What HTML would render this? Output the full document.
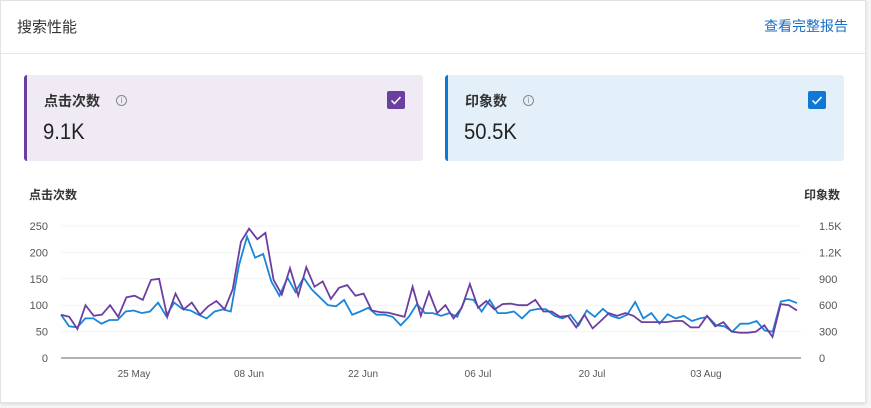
<!DOCTYPE html>
<html><head><meta charset="utf-8"><style>
*{margin:0;padding:0;box-sizing:border-box}
body{width:871px;height:408px;background:#f5f5f5;font-family:"Liberation Sans","Noto Sans CJK SC",sans-serif;position:relative;overflow:hidden}
.card{position:absolute;left:0;top:0;width:866px;height:403px;background:#fff;border:1px solid #e3e3e3;box-shadow:0 1px 3px rgba(0,0,0,.12)}
.hdr{position:absolute;left:0;top:0;width:100%;height:53px;border-bottom:1px solid #e6e6e6}
.title{position:absolute;left:16px;top:15px;font-size:15px;color:#333}
.link{position:absolute;right:17px;top:15px;font-size:14px;color:#1a6fc4}
.m{position:absolute;top:74px;width:399px;height:86px;border-radius:3px}
.m .l{position:absolute;left:17px;top:16px;font-size:14px;font-weight:bold;color:#333}
.m .i{position:absolute;top:20px;width:11px;height:11px;border:1px solid #888;border-radius:50%;font-size:8px;color:#888;text-align:center;line-height:9px}
.m .v{position:absolute;left:16px;top:44px;font-size:22px;color:#222;transform:scaleX(.92);transform-origin:left}
.m .c{position:absolute;right:18px;top:16px;width:18px;height:18px;border-radius:2px}
.ax{position:absolute;font-size:11px;color:#555}
</style></head><body>
<div class="card">
<div class="hdr"><div class="title">搜索性能</div><div class="link">查看完整报告</div></div>
<div class="m" style="left:23px;background:#f0eaf5;border-left:3px solid #6b3fa0"><div class="l">点击次数</div><div class="i" style="left:89px">i</div><div class="v">9.1K</div><div class="c" style="background:#6b3fa0"><svg width="18" height="18"><path d="M4.5 9.5l3 3 6-6.5" stroke="#fff" stroke-width="1.5" fill="none"/></svg></div></div>
<div class="m" style="left:444px;background:#e3f0fa;border-left:3px solid #0f78d4"><div class="l">印象数</div><div class="i" style="left:75px">i</div><div class="v">50.5K</div><div class="c" style="background:#0f78d4"><svg width="18" height="18"><path d="M4.5 9.5l3 3 6-6.5" stroke="#fff" stroke-width="1.5" fill="none"/></svg></div></div>
<div class="ax" style="left:28px;top:185px;font-weight:bold;font-size:12px;color:#333">点击次数</div>
<div class="ax" style="right:25px;top:185px;font-weight:bold;font-size:12px;color:#333">印象数</div>
<svg id="ch" style="position:absolute;left:0;top:0" width="866" height="403"></svg>
</div>
<script>
var p=[82,78,55,100,80,82,100,78,115,118,110,148,150,78,122,92,105,82,98,108,92,130,220,245,225,237,148,120,170,118,172,135,145,112,133,138,118,122,90,87,86,82,78,135,80,125,85,100,75,95,140,95,108,92,102,103,100,100,110,88,88,78,80,58,82,56,70,85,80,85,80,68,68,68,68,70,70,58,58,80,60,68,50,48,48,50,62,40,102,100,90];
var b=[82,60,58,75,75,65,72,72,88,90,85,88,105,80,105,93,90,82,75,88,92,88,175,230,190,197,145,118,152,125,152,130,115,100,98,110,82,88,95,82,82,78,62,78,102,85,85,80,85,78,112,110,88,110,85,85,88,75,90,93,92,80,75,82,62,90,78,93,80,75,82,106,75,85,65,83,75,80,70,75,78,62,60,50,65,65,70,52,50,107,110,104];
var s='',x0=60,x1=796,y0=357,k=132/250;
for(var v=0;v<=250;v+=50){var y=y0-v*k;s+='<text x="47" y="'+(y+4)+'" font-size="11" fill="#555" text-anchor="end" font-family="Liberation Sans">'+v+'</text>';s+='<text x="818" y="'+(y+4)+'" font-size="11" fill="#555" font-family="Liberation Sans">'+['0','300','600','900','1.2K','1.5K'][v/50]+'</text>';if(v)s+='<line x1="60" x2="800" y1="'+y+'" y2="'+y+'" stroke="#f3f3f3"/>';}
s+='<line x1="60" x2="800" y1="357" y2="357" stroke="#999" stroke-width="1.5"/>';
[['25 May',133],['08 Jun',248],['22 Jun',362],['06 Jul',477],['20 Jul',591],['03 Aug',705]].forEach(function(d){s+='<text x="'+d[1]+'" y="376" font-size="10" fill="#555" text-anchor="middle" font-family="Liberation Sans">'+d[0]+'</text>';});
function pl(a,c){var q=[];for(var i=0;i<a.length;i++)q.push((x0+i*(x1-x0)/(a.length-1)).toFixed(1)+','+(y0-a[i]*k).toFixed(1));return '<polyline points="'+q.join(' ')+'" fill="none" stroke="'+c+'" stroke-width="1.8"/>';}
s+=pl(b,'#1a86d9')+pl(p,'#6b3fa0');
document.getElementById('ch').innerHTML=s;
</script>
</body></html>
